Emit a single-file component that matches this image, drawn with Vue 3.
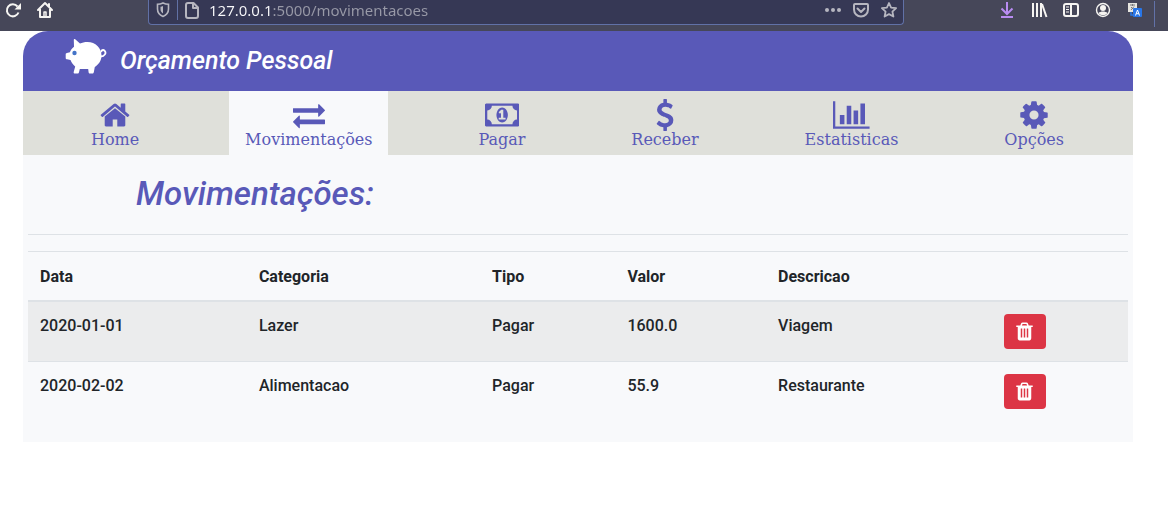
<script setup>
import { ref } from 'vue'

const address = ref('127.0.0.1:5000/movimentacoes')

const tabs = [
  {
    label: 'Home',
    width: 1792,
    path: 'M1472 992v480q0 26-19 45t-45 19h-384v-384h-256v384h-384q-26 0-45-19t-19-45v-480q0-1 .5-3t.5-3l575-474 575 474q1 2 1 6zm223-69l-62 74q-8 9-21 11h-3q-13 0-21-7l-692-577-692 577q-12 8-24 7-13-2-21-11l-62-74q-8-10-7-23.500t11-21.500l719-599q32-26 76-26t76 26l244 204v-195q0-14 9-23t23-9h192q14 0 23 9t9 23v408l219 182q10 8 11 21.500t-7 23.500z',
  },
  {
    label: 'Movimentações',
    active: true,
    width: 1792,
    path: 'M1792 1184v192q0 13-9.500 22.500t-22.500 9.500h-1376v192q0 13-9.500 22.500t-22.500 9.500q-12 0-24-10l-319-320q-9-9-9-22 0-14 9-23l320-320q9-9 23-9 13 0 22.500 9.500t9.500 22.500v192h1376q13 0 22.500 9.500t9.500 22.500zm0-544q0 14-9 23l-320 320q-9 9-23 9-13 0-22.500-9.500t-9.500-22.500v-192h-1376q-13 0-22.500-9.500t-9.500-22.500v-192q0-13 9.500-22.500t22.500-9.500h1376v-192q0-14 9-23t23-9q12 0 24 10l319 319q9 9 9 23z',
  },
  {
    label: 'Pagar',
    width: 1920,
    path: 'M768 1152h384v-96h-128v-448h-114l-148 137 77 80q42-37 55-57h2v288h-128v96zm512-256q0 70-21 142t-59.500 134-101.500 101-138 39-138-39-101.500-101-59.500-134-21-142 21-142 59.500-134 101.500-101 138-39 138 39 101.500 101 59.500 134 21 142zm512 256v-512q-106 0-181-75t-75-181h-1152q0 106-75 181t-181 75v512q106 0 181 75t75 181h1152q0-106 75-181t181-75zm128-832v1152q0 26-19 45t-45 19h-1792q-26 0-45-19t-19-45v-1152q0-26 19-45t45-19h1792q26 0 45 19t19 45z',
  },
  {
    label: 'Receber',
    width: 1792,
    path: 'M1362 1185q0 153-99.500 263.500t-258.500 136.500v175q0 14-9 23t-23 9h-135q-13 0-22.500-9.500t-9.500-22.500v-175q-66-9-127.500-31t-101.500-44.500-74-48-46.500-37.500-17.500-18q-17-21-2-41l103-135q7-10 23-12 15-2 24 9l2 2q113 99 243 125 37 8 74 8 81 0 142.500-43t61.500-122q0-28-15-53t-33.500-42-58.500-37.500-66-32-80-32.500q-39-16-61.500-25t-61.500-26.500-62.500-31-56.500-35.500-53.500-42.500-43.500-49-35.500-58-21-66.500-8.500-78q0-138 98-242t255-134v-180q0-13 9.500-22.500t22.500-9.500h135q14 0 23 9t9 23v176q57 6 110.500 23t87 33.500 63.500 37.500 39 29 15 14q17 18 5 38l-81 146q-8 15-23 16-14 3-27-7-3-3-14.500-12t-39-26.500-58.500-32-74.500-26-85.500-11.500q-95 0-155 43t-60 111q0 26 8.500 48t29.500 41.500 39.500 33 56 31 60.500 27 70 27.500q53 20 81 31.500t76 35 75.500 42.500 62 50 53 63.500 31.500 76.500 13 94z',
  },
  {
    label: 'Estatisticas',
    width: 2048,
    path: 'M640 896v512H384V896zM1024 384v1024H768V384zM2048 1536v128H0V128h128v1408zM1408 640v768h-256V640zM1792 256v1152h-256V256z',
  },
  {
    label: 'Opções',
    width: 1792,
    path: 'M1152 896q0-106-75-181t-181-75-181 75-75 181 75 181 181 75 181-75 75-181zm512-109v222q0 12-8 23t-20 13l-185 28q-19 54-39 91 35 50 107 138 10 12 10 25t-9 23q-27 37-99 108t-94 71q-12 0-26-9l-138-108q-44 23-91 38-16 136-29 186-7 28-36 28h-222q-14 0-24.500-8.500t-11.500-21.500l-28-184q-49-16-90-37l-141 107q-10 9-25 9-14 0-25-11-126-114-165-168-7-10-7-23 0-12 8-23 15-21 51-66.500t54-70.500q-27-50-41-99l-183-27q-13-2-21-12.500t-8-23.500v-222q0-12 8-23t19-13l186-28q14-46 39-92-40-57-107-138-10-12-10-24 0-10 9-23 26-36 98.500-107.500t94.500-71.500q13 0 26 10l138 107q44-23 91-38 16-136 29-186 7-28 36-28h222q14 0 24.500 8.500t11.500 21.500l28 184q49 16 90 37l142-107q9-9 24-9 13 0 25 10 129 119 165 170 7 8 7 22 0 12-8 23-15 21-51 66.500t-54 70.500q26 50 41 98l183 28q13 2 21 12.500t8 23.500z',
  },
]

const rows = ref([
  { data: '2020-01-01', categoria: 'Lazer', tipo: 'Pagar', valor: '1600.0', descricao: 'Viagem' },
  { data: '2020-02-02', categoria: 'Alimentacao', tipo: 'Pagar', valor: '55.9', descricao: 'Restaurante' },
])

function remove(index) {
  rows.value.splice(index, 1)
}
</script>

<template>
  <div class="browser">
    <div class="tools start">
      <button type="button" aria-label="Reload">
        <svg width="18" height="18" viewBox="0 0 18 18" fill="none" stroke="currentColor" stroke-width="2">
          <path d="M14.500 11.500A6 6 0 1 1 13.500 5.500" />
          <path d="M17 2v6.500h-6.500z" fill="currentColor" stroke="none" />
        </svg>
      </button>
      <button type="button" aria-label="Home page">
        <svg width="18" height="18" viewBox="0 0 18 18" fill="none" stroke="currentColor" stroke-width="2" stroke-linejoin="round" stroke-linecap="round">
          <path d="M2 9l7-7 7 7M4 8v8h10V8M13 3v3" />
          <path d="M8 16v-5h2v5" stroke-width="1.500" />
        </svg>
      </button>
    </div>
    <div class="urlbar">
      <div class="identity">
        <svg width="14" height="16" viewBox="0 0 14 16" fill="none" stroke="currentColor" stroke-width="1.600">
          <path d="M7 1c2 1 4 1.300 5.500 1.300V7c0 3.500-2 6-5.500 7.500C3.500 13 1.500 10.500 1.500 7V2.300C3 2.300 5 2 7 1z" />
          <path d="M7 4v7.500C5.200 10.300 4.500 9 4.500 7V4.800C5.500 4.700 6.300 4.400 7 4z" fill="currentColor" stroke="none" />
        </svg>
      </div>
      <svg class="page-icon" width="14" height="17" viewBox="0 0 14 17" fill="none" stroke="currentColor" stroke-width="2" stroke-linejoin="round">
        <path d="M3 1h5.500L13 5.500V14a2 2 0 0 1-2 2H3a2 2 0 0 1-2-2V3a2 2 0 0 1 2-2zM8 1v5h5" />
      </svg>
      <input v-model="address" type="text" aria-label="Address" />
      <button type="button" aria-label="Page actions">
        <svg width="18" height="18" viewBox="0 0 18 18" fill="currentColor">
          <circle cx="3" cy="9" r="2" /><circle cx="9" cy="9" r="2" /><circle cx="15" cy="9" r="2" />
        </svg>
      </button>
      <button type="button" aria-label="Save">
        <svg width="18" height="18" viewBox="0 0 18 18" fill="none" stroke="currentColor" stroke-width="2" stroke-linecap="round" stroke-linejoin="round">
          <path d="M3 3h12a1 1 0 0 1 1 1v4.500a7 7 0 0 1-14 0V4a1 1 0 0 1 1-1zM5.500 7.500L9 11l3.500-3.500" />
        </svg>
      </button>
      <button type="button" aria-label="Bookmark">
        <svg width="18" height="18" viewBox="0 0 18 18" fill="none" stroke="currentColor" stroke-width="1.800" stroke-linejoin="round">
          <path d="M9 2l2.100 4.600 5 .6-3.700 3.400 1 4.900L9 13.100l-4.400 2.400 1-4.900L1.900 7.200l5-.6z" />
        </svg>
      </button>
    </div>
    <div class="tools end">
      <button type="button" class="download" aria-label="Downloads">
        <svg width="18" height="18" viewBox="0 0 18 18" fill="none" stroke="currentColor" stroke-width="2">
          <path d="M9 1v12M3.500 7.500L9 13l5.500-5.500M3 16h12" />
        </svg>
      </button>
      <button type="button" aria-label="Library">
        <svg width="18" height="18" viewBox="0 0 18 18" fill="none" stroke="currentColor" stroke-width="2">
          <path d="M3 2v14M7 2v14M11 2v14" stroke-width="2" /><path d="M12 3l4.500 13" />
        </svg>
      </button>
      <button type="button" aria-label="Sidebar">
        <svg width="18" height="18" viewBox="0 0 18 18" fill="none" stroke="currentColor" stroke-width="2">
          <rect x="2" y="3" width="14" height="12" rx="2" /><path d="M9 3v12" /><path d="M4 6h3M4 8.500h3M4 11h3" stroke-width="1" />
        </svg>
      </button>
      <button type="button" aria-label="Account">
        <svg width="18" height="18" viewBox="0 0 18 18" fill="none" stroke="currentColor" stroke-width="1.400">
          <circle cx="9" cy="9" r="6.500" /><circle cx="9" cy="7" r="3" fill="currentColor" stroke="none" />
          <path d="M4.500 12c2 -2 7-2 9 0-2 3-7 3-9 0z" fill="currentColor" stroke="none" />
        </svg>
      </button>
      <button type="button" aria-label="Translate">
        <svg width="18" height="18" viewBox="0 0 18 18" fill="none">
          <path d="M2 2h9v9H2z" fill="#e6e5df" />
          <path d="M4 4h5M6.500 3v2M8 5.500L5 9M5 6l3 3" stroke="#77787c" stroke-width="1" />
          <path d="M5 11v3h3" stroke="#2876e2" stroke-width="1.500" />
          <rect x="7" y="7" width="9" height="9" rx="1" fill="#2876e8" />
          <path d="M9.500 14.500l2-5.500 2 5.500M10.200 12.700h2.600" stroke="#fff" stroke-width="1" />
        </svg>
      </button>
      <span class="divider"></span>
    </div>
  </div>

  <div class="container">
    <header class="brand">
      <svg class="pig" width="42" height="36" viewBox="0 0 42 36">
        <path d="M8.800.8c0-.8.800-1 1.400-.5L15 4.600C17 3.600 19.500 3 22.500 3 30.500 3 36.500 9 36.500 16.500c0 5-2.700 9-6.700 11.500l-1 5.200c-.2.900-.6 1.300-1.400 1.300h-2.500c-.8 0-1.200-.4-1.300-1.200l-.4-3.300h-8.400l-.8 3.300c-.2.800-.6 1.200-1.400 1.200h-2.700c-1 0-1.400-.6-1.200-1.500l1.500-5.500C8.500 26 6.500 23.800 5.500 21L2 20.300c-.8-.2-1.300-.6-1.300-1.400v-3.600c0-.8.400-1.300 1.200-1.400l3-.6C5.600 11 7 9.300 9 7.800z" fill="#fff" />
        <path d="M35.500 17.500c4.500 0 6-3.700 4.200-5.700-1.500-1.500-3.700-.6-3.200 1.400" fill="none" stroke="#fff" stroke-width="1.800" />
        <circle cx="9.500" cy="14" r="2.200" fill="#4474c8" />
      </svg>
      <span>Orçamento Pessoal</span>
    </header>

    <nav class="tabs">
      <a v-for="tab in tabs" :key="tab.label" href="#" :class="{ active: tab.active }" :aria-current="tab.active ? 'page' : null">
        <svg :viewBox="`0 0 ${tab.width} 1792`" height="32" fill="currentColor"><path :d="tab.path" /></svg>
        {{ tab.label }}
      </a>
    </nav>

    <main>
      <h2>Movimentações:</h2>
      <hr />
      <table>
        <colgroup>
          <col class="c-data" /><col class="c-categoria" /><col class="c-tipo" />
          <col class="c-valor" /><col class="c-descricao" /><col />
        </colgroup>
        <thead>
          <tr>
            <th scope="col">Data</th>
            <th scope="col">Categoria</th>
            <th scope="col">Tipo</th>
            <th scope="col">Valor</th>
            <th scope="col">Descricao</th>
            <th></th>
          </tr>
        </thead>
        <tbody>
          <tr v-for="(row, i) in rows" :key="row.data">
            <td>{{ row.data }}</td>
            <td>{{ row.categoria }}</td>
            <td>{{ row.tipo }}</td>
            <td>{{ row.valor }}</td>
            <td>{{ row.descricao }}</td>
            <td>
              <button type="button" class="delete" aria-label="Excluir" @click="remove(i)">
                <svg width="21" height="21" viewBox="0 0 1792 1792" fill="currentColor">
                  <path d="M704 1376v-704q0-14-9-23t-23-9h-64q-14 0-23 9t-9 23v704q0 14 9 23t23 9h64q14 0 23-9t9-23zm256 0v-704q0-14-9-23t-23-9h-64q-14 0-23 9t-9 23v704q0 14 9 23t23 9h64q14 0 23-9t9-23zm256 0v-704q0-14-9-23t-23-9h-64q-14 0-23 9t-9 23v704q0 14 9 23t23 9h64q14 0 23-9t9-23zm-544-992h448l-48-117q-7-9-17-11h-317q-10 2-17 11zm928 32v64q0 14-9 23t-23 9h-96v948q0 83-47 143.500t-113 60.500h-832q-66 0-113-58.500t-47-141.500v-952h-96q-14 0-23-9t-9-23v-64q0-14 9-23t23-9h309l70-167q15-37 54-63t79-26h320q40 0 79 26t54 63l70 167h309q14 0 23 9t9 23z" />
                </svg>
              </button>
            </td>
          </tr>
        </tbody>
      </table>
    </main>
  </div>
</template>

<style>
body {
  margin: 0;
  background: #fff;
}
</style>

<style scoped>
* {
  box-sizing: border-box;
}

button {
  display: flex;
  align-items: center;
  justify-content: center;
  padding: 0;
  border: 0;
  background: none;
  color: inherit;
  cursor: pointer;
}

svg {
  display: block;
}

.browser {
  display: flex;
  height: 31px;
  background: #464759;
  color: #f6f5f2;
}

.tools {
  display: flex;
  align-items: flex-start;
  gap: 14px;
  padding-top: 1px;
}

.start {
  width: 148px;
  padding-left: 4px;
}

.end {
  flex: 1;
  justify-content: flex-end;
}

.download {
  color: #b98cf2;
}

.divider {
  width: 1px;
  height: 26px;
  margin: 0 13px 0 -4px;
  background: #6272a8;
}

.urlbar {
  display: flex;
  flex: 0 1 756px;
  align-items: center;
  gap: 10px;
  height: 25px;
  padding: 0 5px 4px 7px;
  border: 1px solid #6171a6;
  border-top: 0;
  border-radius: 0 0 4px 4px;
  background: #363855;
  color: #b6b6c0;
}

.identity {
  display: flex;
  align-items: center;
  height: 20px;
  margin-right: -3px;
  padding-right: 7px;
  border-right: 1px solid #6171a6;
}

.urlbar input {
  flex: 1;
  min-width: 0;
  height: 21px;
  padding: 0;
  border: 0;
  outline: 0;
  background: linear-gradient(90deg, #fafafc 63px, #9899a7 63px);
  background-clip: text;
  color: #fafafc;
  -webkit-text-fill-color: transparent;
  font: 15px/21px "Noto Sans", "Open Sans", sans-serif;
}

/* The rounded top reveals the page colour behind the panel. */
.container {
  margin: 0 35px 0 23px;
  border-radius: 25px 25px 0 0;
  background: #f8f9fb;
}

.brand {
  display: flex;
  align-items: center;
  gap: 13px;
  height: 60px;
  padding-left: 42px;
  border-radius: 25px 25px 0 0;
  background: #5959b8;
  color: #fff;
  font: italic 500 25px/36px Roboto, sans-serif;
}

.pig {
  margin-bottom: 8px;
}

.tabs {
  display: flex;
  justify-content: space-around;
  padding: 0 16px 0 15px;
  background: #dfe0da;
}

.tabs a {
  display: flex;
  flex-direction: column;
  align-items: center;
  padding: 8px 16px 6px;
  color: #5959b8;
  font: 16px/18px "DejaVu Serif", serif;
  text-decoration: none;
}

.tabs .active {
  background: #f8f9fb;
}

main {
  padding: 20px 5px 21px;
  color: #212529;
  font: 500 16px/24px Roboto, sans-serif;
}

h2 {
  margin: 0 0 21px;
  padding-left: 108px;
  color: #5959b8;
  font: italic 500 33px/38px Roboto, sans-serif;
}

hr {
  margin: 0 0 16px;
  border: 0;
  border-top: 1px solid #dee2e6;
}

table {
  width: 100%;
  border-spacing: 0;
  table-layout: fixed;
}

.c-data { width: 19.9%; }
.c-categoria { width: 21.2%; }
.c-tipo { width: 12.3%; }
.c-valor { width: 13.7%; }
.c-descricao { width: 20.5%; }

th,
td {
  padding: 12px;
  border-top: 1px solid #dee2e6;
  text-align: left;
  vertical-align: top;
}

th {
  padding: 13px 12px 11px;
  border-bottom: 2px solid #dee2e6;
  font-weight: 700;
}

tbody tr:first-child td {
  border-top: 0;
}

tbody tr:nth-child(odd) {
  background: #ebeced;
}

.delete {
  width: 42px;
  height: 35px;
  border-radius: 4px;
  background: #dc3545;
  color: #fff;
}
</style>
